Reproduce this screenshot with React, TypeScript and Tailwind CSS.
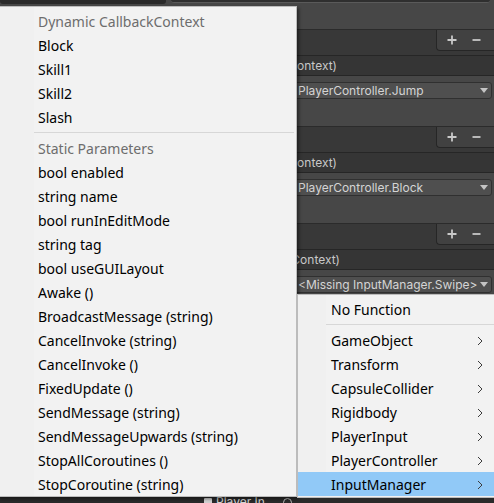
import React from "react";

const leftDynamic = ["Block", "Skill1", "Skill2", "Slash"];
const leftStatic = [
  "bool enabled",
  "string name",
  "bool runInEditMode",
  "string tag",
  "bool useGUILayout",
  "Awake ()",
  "BroadcastMessage (string)",
  "CancelInvoke (string)",
  "CancelInvoke ()",
  "FixedUpdate ()",
  "SendMessage (string)",
  "SendMessageUpwards (string)",
  "StopAllCoroutines ()",
  "StopCoroutine (string)",
];
const rightItems = ["GameObject", "Transform", "CapsuleCollider", "Rigidbody", "PlayerInput", "PlayerController"];

function Plus() {
  return (
    <svg width="10" height="10" viewBox="0 0 10 10">
      <path d="M5 0.5V9.5M0.5 5H9.5" stroke="#c8c8c8" strokeWidth="1.8" />
    </svg>
  );
}
function Minus() {
  return (
    <svg width="9" height="10" viewBox="0 0 9 10">
      <path d="M0.5 5H8.5" stroke="#c8c8c8" strokeWidth="1.8" />
    </svg>
  );
}
function Tri() {
  return (
    <svg width="8" height="5" viewBox="0 0 8 5">
      <path d="M0 0H8L4 5Z" fill="#c4c4c4" />
    </svg>
  );
}
function Chevron() {
  return (
    <svg width="6" height="10" viewBox="0 0 6 10">
      <path d="M1 1L5 5L1 9" stroke="#3c3c3c" strokeWidth="1" fill="none" />
    </svg>
  );
}

function Footer() {
  return (
    <div className="flex h-[25px] justify-end">
      <div className="flex h-[21px] w-[58px] items-center gap-[15px] rounded-bl-[4px] border-b border-l border-[#262626] bg-[#414141] pl-[10px]">
        <Plus />
        <Minus />
      </div>
    </div>
  );
}

function Header({ text, end }: { text: string; end: "a" | "b" }) {
  return (
    <div className="flex h-[21px] items-center border-y border-[#262626] bg-[#353535] text-[#c8c8c8]">
      <div className={`flex justify-end whitespace-nowrap ${end === "a" ? "w-[337px]" : "w-[340px]"}`}>{text}</div>
    </div>
  );
}

function Element({ text }: { text: string }) {
  return (
    <div className="flex h-[51px] flex-col border-b border-[#2b2b2b] bg-[#474747]">
      <div className="mt-[6px] ml-[293px] mr-[2px] flex h-[17px] items-center justify-between rounded-[3px] border border-[#303030] bg-[#4f4f4f] pl-[4px] pr-[3px] text-[#d4d4d4]">
        <span className="whitespace-nowrap">{text}</span>
        <Tri />
      </div>
    </div>
  );
}

export default function App() {
  return (
    <div className="relative h-[503px] w-[494px] overflow-hidden bg-[#383838] font-['Inter',sans-serif] text-[12px] leading-[16px]">
      {/* inspector background */}
      <div className="flex flex-col">
        <div className="flex h-[30px] flex-col border-b border-[#2b2b2b] bg-[#474747]">
          <div className="flex h-[4px] gap-[5px]">
            <div className="w-[166px] rounded-b-[3px] bg-[#2a2a2a]" />
            <div className="mr-[4px] h-[3px] flex-1 rounded-b-[3px] border-b border-[#5a5a5a] bg-[#2f2f2f]" />
          </div>
        </div>
        <Footer />
        <Header text="On Jump (CallbackContext)" end="a" />
        <Element text="PlayerController.Jump" />
        <Footer />
        <Header text="On Block (CallbackContext)" end="a" />
        <Element text="PlayerController.Block" />
        <Footer />
        <Header text="On Swipe (CallbackContext)" end="b" />
        <Element text="<Missing InputManager.Swipe>" />
        <Footer />
        <Header text="On Skill1 (CallbackContext)" end="a" />
        <Element text="PlayerController.Skill1" />
        <Footer />
        <Header text="On Slash (CallbackContext)" end="a" />
        <div className="flex h-[28px] bg-[#474747]" />
        <div className="flex h-[20px] items-center bg-[#2a2a2a]">
          <div className="ml-[204px] flex w-[88px] items-center gap-[4px] text-[#d4d4d4]">
            <div className="h-[8px] w-[8px] rounded-[1px] bg-[#cfcfcf]" />
            <span className="flex-1 whitespace-nowrap">Player In</span>
            <div className="h-[9px] w-[9px] rounded-full border border-[#bdbdbd]" />
          </div>
        </div>
      </div>

      {/* left popup menu */}
      <div className="absolute left-[-3px] top-[6px] flex h-[491px] w-[300px] border border-[#bcbcbc] bg-[linear-gradient(to_right,#f0f0f0_36px,#f2f2f2_36px)] font-['Noto_Sans',sans-serif] text-[14px] shadow-[2px_2px_3px_rgba(0,0,0,0.45)]">
        <div className="flex flex-1 flex-col pt-[2px] pl-[36px]">
          <div className="flex h-[24px] items-center pl-[4px] pt-[2px] text-[#6d6d6d]">Dynamic CallbackContext</div>
          {leftDynamic.map((t) => (
            <div key={t} className="flex h-[24px] items-center pl-[4px] pt-[2px] text-black">
              {t}
            </div>
          ))}
          <div className="flex h-[7px] items-center pr-[2px]">
            <div className="h-px flex-1 bg-[#d7d7d7]" />
          </div>
          <div className="flex h-[24px] items-center pl-[4px] pt-[2px] text-[#6d6d6d]">Static Parameters</div>
          {leftStatic.map((t) => (
            <div key={t} className="flex h-[24px] items-center whitespace-nowrap pl-[4px] pt-[2px] text-black">
              {t}
            </div>
          ))}
        </div>
      </div>

      {/* right popup menu */}
      <div className="absolute left-[297px] top-[294px] flex h-[204px] w-[200px] flex-col border border-[#bcbcbc] bg-[linear-gradient(to_right,#f0f0f0_28px,#f2f2f2_28px)] pt-[2px] font-['Noto_Sans',sans-serif] text-[14px] text-black">
        <div className="flex h-[24px] items-center pl-[33px] pt-[2px]">No Function</div>
        <div className="flex h-[7px] items-center pl-[28px] pr-[2px]">
          <div className="h-px flex-1 bg-[#d7d7d7]" />
        </div>
        {rightItems.map((t) => (
          <div key={t} className="flex h-[24px] items-center justify-between pl-[33px] pr-[13px] pt-[2px]">
            <span>{t}</span>
            <Chevron />
          </div>
        ))}
        <div className="flex h-[24px] items-center justify-between bg-[#91c9f7] pl-[33px] pr-[13px] pt-[2px]">
          <span>InputManager</span>
          <Chevron />
        </div>
      </div>
    </div>
  );
}
